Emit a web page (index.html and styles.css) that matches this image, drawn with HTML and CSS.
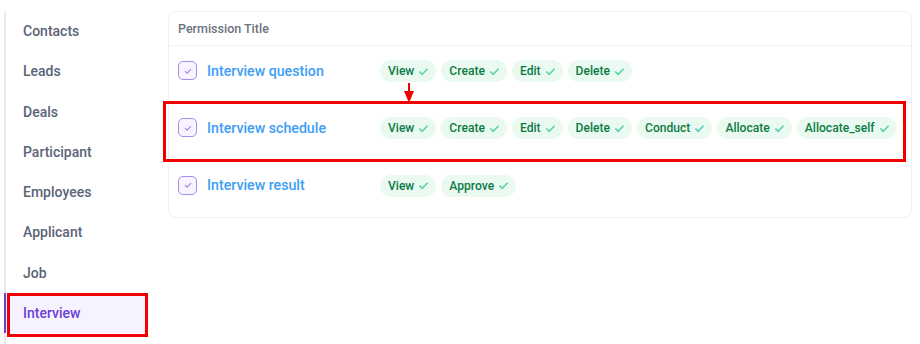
FILE: index.html
```html
<!DOCTYPE html>
<html lang="en">
<head>
    <meta charset="UTF-8">
    <meta name="viewport" content="width=device-width, initial-scale=1.0">
    <link rel="stylesheet" href="styles.css">
</head>
<body>
    <div class="layout">
        <aside class="sidebar">
            <a class="side-item" href="#">Contacts</a>
            <a class="side-item" href="#">Leads</a>
            <a class="side-item" href="#">Deals</a>
            <a class="side-item" href="#">Participant</a>
            <a class="side-item" href="#">Employees</a>
            <a class="side-item" href="#">Applicant</a>
            <a class="side-item" href="#">Job</a>
            <a class="side-item active" href="#">Interview</a>
        </aside>

        <main class="content">
            <div class="card">
                <div class="card-head">Permission Title</div>

                <div class="perm-row">
                    <div class="perm-title">
                        <span class="checkbox"><svg viewBox="0 0 12 12"><polyline points="3,6.2 5.2,8.2 9,4"/></svg></span>
                        <span class="perm-name">Interview question</span>
                    </div>
                    <div class="chips">
                        <span class="chip">View<svg viewBox="0 0 12 12"><polyline points="1.5,6 4.5,9 10.5,3"/></svg></span>
                        <span class="chip">Create<svg viewBox="0 0 12 12"><polyline points="1.5,6 4.5,9 10.5,3"/></svg></span>
                        <span class="chip">Edit<svg viewBox="0 0 12 12"><polyline points="1.5,6 4.5,9 10.5,3"/></svg></span>
                        <span class="chip">Delete<svg viewBox="0 0 12 12"><polyline points="1.5,6 4.5,9 10.5,3"/></svg></span>
                    </div>
                </div>

                <div class="perm-row marked">
                    <div class="perm-title">
                        <span class="checkbox"><svg viewBox="0 0 12 12"><polyline points="3,6.2 5.2,8.2 9,4"/></svg></span>
                        <span class="perm-name">Interview schedule</span>
                    </div>
                    <div class="chips">
                        <span class="chip">View<svg viewBox="0 0 12 12"><polyline points="1.5,6 4.5,9 10.5,3"/></svg></span>
                        <span class="chip">Create<svg viewBox="0 0 12 12"><polyline points="1.5,6 4.5,9 10.5,3"/></svg></span>
                        <span class="chip">Edit<svg viewBox="0 0 12 12"><polyline points="1.5,6 4.5,9 10.5,3"/></svg></span>
                        <span class="chip">Delete<svg viewBox="0 0 12 12"><polyline points="1.5,6 4.5,9 10.5,3"/></svg></span>
                        <span class="chip">Conduct<svg viewBox="0 0 12 12"><polyline points="1.5,6 4.5,9 10.5,3"/></svg></span>
                        <span class="chip">Allocate<svg viewBox="0 0 12 12"><polyline points="1.5,6 4.5,9 10.5,3"/></svg></span>
                        <span class="chip">Allocate_self<svg viewBox="0 0 12 12"><polyline points="1.5,6 4.5,9 10.5,3"/></svg></span>
                    </div>
                </div>

                <div class="perm-row">
                    <div class="perm-title">
                        <span class="checkbox"><svg viewBox="0 0 12 12"><polyline points="3,6.2 5.2,8.2 9,4"/></svg></span>
                        <span class="perm-name">Interview result</span>
                    </div>
                    <div class="chips">
                        <span class="chip">View<svg viewBox="0 0 12 12"><polyline points="1.5,6 4.5,9 10.5,3"/></svg></span>
                        <span class="chip">Approve<svg viewBox="0 0 12 12"><polyline points="1.5,6 4.5,9 10.5,3"/></svg></span>
                    </div>
                </div>

                <!-- annotation arrow -->
                <svg class="arrow" viewBox="0 0 12 20">
                    <line x1="6" y1="0" x2="6" y2="9"/>
                    <polygon points="1,8 11,8 6,20"/>
                </svg>
            </div>
        </main>
    </div>
</body>
</html>
```

FILE: styles.css
```css
body {
    font-family: Roboto, 'Noto Sans', sans-serif;
    margin: 0;
    padding: 0;
    background-color: #FFFFFF;
    color: #333;
}
.layout {
    display: flex;
    align-items: flex-start;
    padding: 11px 8px 0 4px;
}
.sidebar {
    display: flex;
    flex-direction: column;
    width: 142px;
    min-height: calc(100vh - 11px);
    border-left: 2px solid #e8eaef;
}
.side-item {
    display: flex;
    align-items: center;
    height: 40.25px;
    margin-left: -2px;
    padding-left: 17px;
    border-left: 2px solid transparent;
    text-decoration: none;
    font-size: 14px;
    font-weight: 500;
    color: #5b6478;
}
.side-item.active {
    position: relative;
    height: 40px;
    border-left-color: #6a3fd6;
    background-color: #f6f2ff;
    color: #6a3fd6;
}
.side-item.active::after {
    content: "";
    position: absolute;
    top: 0;
    bottom: -4px;
    left: 1px;
    right: 0;
    border: 3px solid #f20000;
}
.content {
    flex: 1;
    margin-left: 20px;
}
.card {
    position: relative;
    border: 1px solid #eef0f4;
    border-radius: 8px;
}
.card-head {
    height: 33px;
    display: flex;
    align-items: center;
    padding-left: 9px;
    font-size: 12.5px;
    font-weight: 500;
    color: #6b7280;
    border-bottom: 1px solid #f0f1f6;
}
.perm-row {
    display: flex;
    align-items: center;
    height: 57px;
    padding-left: 9px;
    padding-bottom: 7px;
    border-bottom: 1px solid #f0f1f6;
    box-sizing: border-box;
}
.perm-row:last-of-type {
    border-bottom: none;
}
.perm-row.marked {
    position: relative;
}
.perm-row.marked::after {
    content: "";
    position: absolute;
    top: -2px;
    bottom: -3px;
    left: -6px;
    right: 5px;
    border: 3px solid #f20000;
}
.perm-title {
    display: flex;
    align-items: center;
    width: 202px;
    flex-shrink: 0;
}
.checkbox {
    width: 17px;
    height: 17px;
    border: 1.5px solid #a98bef;
    border-radius: 5px;
    background-color: #f7f4ff;
    display: flex;
    align-items: center;
    justify-content: center;
    margin-right: 10px;
}
.checkbox svg {
    width: 12px;
    height: 12px;
    fill: none;
    stroke: #9c80e6;
    stroke-width: 1.1;
}
.perm-name {
    font-size: 14.2px;
    font-weight: 500;
    color: #3d9ef4;
}
.chips {
    display: flex;
    gap: 5px;
    margin-top: 1px;
}
.chip {
    display: flex;
    align-items: center;
    gap: 4px;
    height: 22px;
    padding: 0 7px 0 8px;
    border-radius: 11px;
    background-color: #eafaf1;
    color: #0c7a45;
    font-size: 12.1px;
    font-weight: 500;
}
.chip svg {
    width: 11px;
    height: 11px;
    fill: none;
    stroke: #5dd1ad;
    stroke-width: 1.8;
}
.arrow {
    position: absolute;
    left: 234px;
    top: 71px;
    width: 12px;
    height: 20px;
}
.arrow line {
    stroke: #f20000;
    stroke-width: 2;
}
.arrow polygon {
    fill: #f20000;
}
```
